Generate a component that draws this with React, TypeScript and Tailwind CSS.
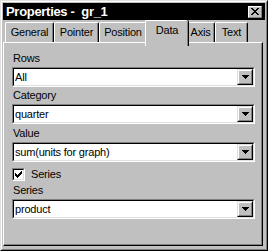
const FONT = { fontFamily: '"Liberation Sans", Arial, sans-serif' };

const TABS = [
  { label: 'General', w: 'w-[49px]' },
  { label: 'Pointer', w: 'w-[45px]' },
  { label: 'Position', w: 'w-[48px]' },
  { label: 'Data', w: 'w-[38px]', active: true },
  { label: 'Axis', w: 'w-[29px]' },
  { label: 'Text', w: 'w-[33px]' },
];

const CHECK = ['......X', '.....XX', 'X...XXX', 'XX.XXX.', 'XXXXX..', '.XXX...', '..X....'];

function Arrow() {
  return (
    <svg width="7" height="4" viewBox="0 0 7 4" shapeRendering="crispEdges">
      <path d="M0 0h7v1H0zM1 1h5v1H1zM2 2h3v1H2zM3 3h1v1H3z" fill="#000" />
    </svg>
  );
}

function Combo({ value }: { value: string }) {
  return (
    <div className="h-[20px] border-t border-l border-[#808080] border-b-white border-r-white border-b border-r">
      <div className="h-full flex items-stretch bg-white border-t border-l border-black border-b border-r border-b-[#dfdfdf] border-r-[#dfdfdf]">
        <span className="flex-1 pl-[1px] leading-[16px] text-black tracking-[-0.2px]">{value}</span>
        <div className="w-[16px] bg-[#c0c0c0] border-t border-l border-[#dfdfdf] border-b border-r border-b-black border-r-black">
          <div className="h-full flex items-center justify-center border-t border-l border-white border-b border-r border-b-[#808080] border-r-[#808080]">
            <Arrow />
          </div>
        </div>
      </div>
    </div>
  );
}

function Label({ text }: { text: string }) {
  return <div className="h-[17px] leading-[17px] pl-[1px] tracking-[-0.2px]">{text}</div>;
}

function Checkbox() {
  return (
    <div className="w-[13px] h-[13px] border-t border-l border-[#808080] border-b border-r border-b-white border-r-white">
      <div className="w-full h-full bg-white flex items-center justify-center border-t border-l border-black border-b border-r border-b-[#dfdfdf] border-r-[#dfdfdf]">
        <svg width="7" height="7" viewBox="0 0 7 7" shapeRendering="crispEdges">
          {CHECK.map((row, y) =>
            row.split('').map((c, x) =>
              c === 'X' ? <rect key={`${x}-${y}`} x={x} y={y} width="1" height="1" fill="#000" /> : null,
            ),
          )}
        </svg>
      </div>
    </div>
  );
}

export default function App() {
  return (
    <div style={FONT} className="w-[268px] h-[251px] text-[11px] text-black bg-[#c0c0c0] border-t border-l border-[#dfdfdf] border-b border-r border-b-black border-r-black">
      <div className="h-full flex flex-col p-[1px] border-t border-l border-white border-b border-r border-b-[#808080] border-r-[#808080]">
        {/* title bar */}
        <div className="h-[17px] bg-black flex items-center justify-between pl-[3px] pr-[3px]">
          <span className="text-white font-bold text-[13px] tracking-[-0.3px] whitespace-pre">Properties -  gr_1</span>
          <div className="w-[14px] h-[12px] bg-[#c0c0c0] border-t border-l border-white border-b border-r border-b-[#808080] border-r-[#808080] flex items-center justify-center">
            <svg width="8" height="7" viewBox="0 0 8 7" shapeRendering="crispEdges">
              <path d="M0 0h2v1H0zM6 0h2v1H6zM1 1h2v1H1zM5 1h2v1H5zM2 2h4v1H2zM3 3h2v1H3zM2 4h4v1H2zM1 5h2v1H1zM5 5h2v1H5zM0 6h2v1H0zM6 6h2v1H6z" fill="#000" />
            </svg>
          </div>
        </div>

        {/* tabs */}
        <div className="h-[22px] flex items-start pl-[2px]">
          {TABS.map((t) =>
            t.active ? (
              <div
                key={t.label}
                className={`${t.w} relative z-10 -mx-[2px] px-[2px] box-content h-[23px] bg-[#c0c0c0] border-l border-t border-white rounded-tl-[2px] rounded-tr-[2px] shadow-[inset_-1px_0_#808080,1px_0_#000] text-center pt-[2px] leading-[14px] tracking-[-0.2px]`}
              >
                {t.label}
              </div>
            ) : (
              <div
                key={t.label}
                className={`${t.w} mt-[2px] h-[20px] bg-[#c0c0c0] border-l border-t border-white rounded-tl-[2px] rounded-tr-[2px] shadow-[inset_-1px_0_#808080,inset_-2px_0_#c0c0c0] border-r border-r-black text-center pt-[2px] leading-[14px] tracking-[-0.2px]`}
              >
                {t.label}
              </div>
            ),
          )}
        </div>

        {/* panel */}
        <div className="flex-1 mr-[2px] mb-[2px] border-t border-l border-white border-b border-r border-b-black border-r-black">
          <div className="h-full pt-[7px] pl-[8px] pr-[6px] border-b border-r border-b-[#808080] border-r-[#808080]">
            <Label text="Rows" />
            <Combo value="All" />
            <Label text="Category" />
            <Combo value="quarter" />
            <div className="h-[18px] leading-[18px] pl-[1px] tracking-[-0.2px]">Value</div>
            <Combo value="sum(units for graph)" />
            <div className="h-[20px] flex items-start pt-[6px] gap-[6px]">
              <Checkbox />
              <span className="leading-[13px] tracking-[-0.2px]">Series</span>
            </div>
            <Label text="Series" />
            <Combo value="product" />
          </div>
        </div>
      </div>
    </div>
  );
}
